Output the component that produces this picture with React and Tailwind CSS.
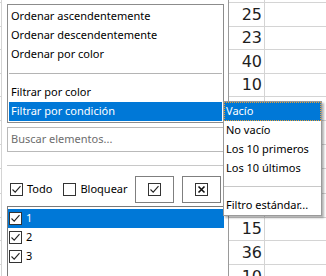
import React from "react";

const rowHeights = [3, 24, 23, 24, 23, 24, 24, 24, 25, 24, 23, 24, 24];
const rowValues = ["", "25", "23", "40", "10", "", "", "", "", "", "15", "36", "10"];

function CheckBox({ checked, className = "" }) {
  return (
    <span className={"inline-flex items-center justify-center w-[13px] h-[13px] border border-[#333] bg-white shrink-0 " + className}>
      {checked && (
        <svg width="11" height="11" viewBox="0 0 11 11">
          <path d="M1.5 5.5 L4.2 8.2 L9.5 2.2" fill="none" stroke="#222" strokeWidth="1.1" />
        </svg>
      )}
    </span>
  );
}

function MenuItem({ children, active }) {
  return (
    <div className={"h-[19px] flex items-center pl-[2px] " + (active ? "bg-[#0078d7] text-white" : "text-[#000]")}>
      {children}
    </div>
  );
}

export default function App() {
  return (
    <div
      className="relative w-[326px] h-[276px] overflow-hidden bg-white text-[11px]"
      style={{ fontFamily: '"Noto Sans", sans-serif' }}
    >
      {/* spreadsheet background */}
      <div className="flex w-full h-full">
        <div className="w-[2px] border-r border-[#d4d4d4] flex flex-col">
          {rowHeights.map((h, i) => (
            <div key={i} className="border-b border-[#d4d4d4] shrink-0" style={{ height: h }} />
          ))}
        </div>
        <div className="w-[226px]" />
        <div className="w-[37px] border-l border-r border-[#d4d4d4] flex flex-col">
          {rowHeights.map((h, i) => (
            <div
              key={i}
              className="border-b border-[#d4d4d4] shrink-0 flex items-center justify-end pr-[2px] text-[16px] text-[#1e1e1e] leading-none"
              style={{ height: h, fontFamily: '"DejaVu Sans", sans-serif' }}
            >
              {rowValues[i]}
            </div>
          ))}
        </div>
        <div className="flex-1 flex flex-col">
          {rowHeights.map((h, i) => (
            <div key={i} className="border-b border-[#d4d4d4] shrink-0" style={{ height: h }} />
          ))}
        </div>
      </div>

      {/* main popup */}
      <div className="absolute left-[3px] top-0 w-[226px] h-[276px] bg-white border-r border-[#9a9a9a] pl-[4px] pt-[4px] pr-[4px] flex flex-col">
        <div className="border border-[#8c8c8c] pt-[2px] pb-[1px] px-[1px] flex flex-col">
          <MenuItem>Ordenar ascendentemente</MenuItem>
          <MenuItem>Ordenar descendentemente</MenuItem>
          <MenuItem>Ordenar por color</MenuItem>
          <div className="h-[19px] flex items-center">
            <div className="w-full h-px bg-[#b4b4b4]" />
          </div>
          <MenuItem>Filtrar por color</MenuItem>
          <MenuItem active>Filtrar por condición</MenuItem>
        </div>

        <div className="mt-[4px] h-[25px] border border-[#b9b9b9] flex items-center pl-[3px] text-[#6d6d6d]">
          Buscar elementos...
        </div>

        <div className="mt-[13px] h-px bg-[#c8c8c8]" />

        <div className="mt-[10px] h-[27px] flex items-center">
          <CheckBox checked className="ml-[3px]" />
          <span className="ml-[4px] text-black">Todo</span>
          <CheckBox className="ml-[11px]" />
          <span className="ml-[4px] text-black">Bloquear</span>
          <div className="ml-auto mr-[3px] flex gap-[8px] shrink-0">
            <div className="w-[39px] h-[27px] shrink-0 border border-[#7f7f7f] flex items-center justify-center">
              <CheckBox checked />
            </div>
            <div className="w-[39px] h-[27px] shrink-0 border border-[#7f7f7f] flex items-center justify-center">
              <span className="w-[13px] h-[13px] border border-[#333] flex items-center justify-center">
                <svg width="9" height="9" viewBox="0 0 9 9">
                  <path d="M1.5 1.5 L7.5 7.5 M7.5 1.5 L1.5 7.5" stroke="#111" strokeWidth="1.6" />
                </svg>
              </span>
            </div>
          </div>
        </div>

        <div className="mt-[3px] flex-1 border-t border-l border-[#7a7a7a] pt-[2px] flex flex-col">
          <div className="h-[19px] flex items-center bg-[#0078d7] text-white pl-[1px]">
            <CheckBox checked />
            <span className="ml-[4px]">1</span>
          </div>
          <div className="h-[19px] flex items-center text-black pl-[1px]">
            <CheckBox checked />
            <span className="ml-[4px]">2</span>
          </div>
          <div className="h-[19px] flex items-center text-black pl-[1px]">
            <CheckBox checked />
            <span className="ml-[4px]">3</span>
          </div>
        </div>
      </div>

      {/* submenu */}
      <div className="absolute left-[223px] top-[101px] w-[99px] h-[115px] bg-white border border-[#9a9a9a] shadow-[2px_2px_2px_rgba(0,0,0,0.3)] flex flex-col">
        <div className="h-[19px] flex items-center pl-[1px] bg-[#0078d7] text-white border border-dotted border-[#f0a030]">
          Vacío
        </div>
        <div className="h-[19px] flex items-center pl-[2px] text-black">No vacío</div>
        <div className="h-[19px] flex items-center pl-[2px] text-black">Los 10 primeros</div>
        <div className="h-[19px] flex items-center pl-[2px] text-black">Los 10 últimos</div>
        <div className="h-[19px] flex items-center">
          <div className="w-full h-px bg-[#c8c8c8]" />
        </div>
        <div className="h-[19px] flex items-center pl-[2px] text-black">Filtro estándar...</div>
      </div>
    </div>
  );
}
